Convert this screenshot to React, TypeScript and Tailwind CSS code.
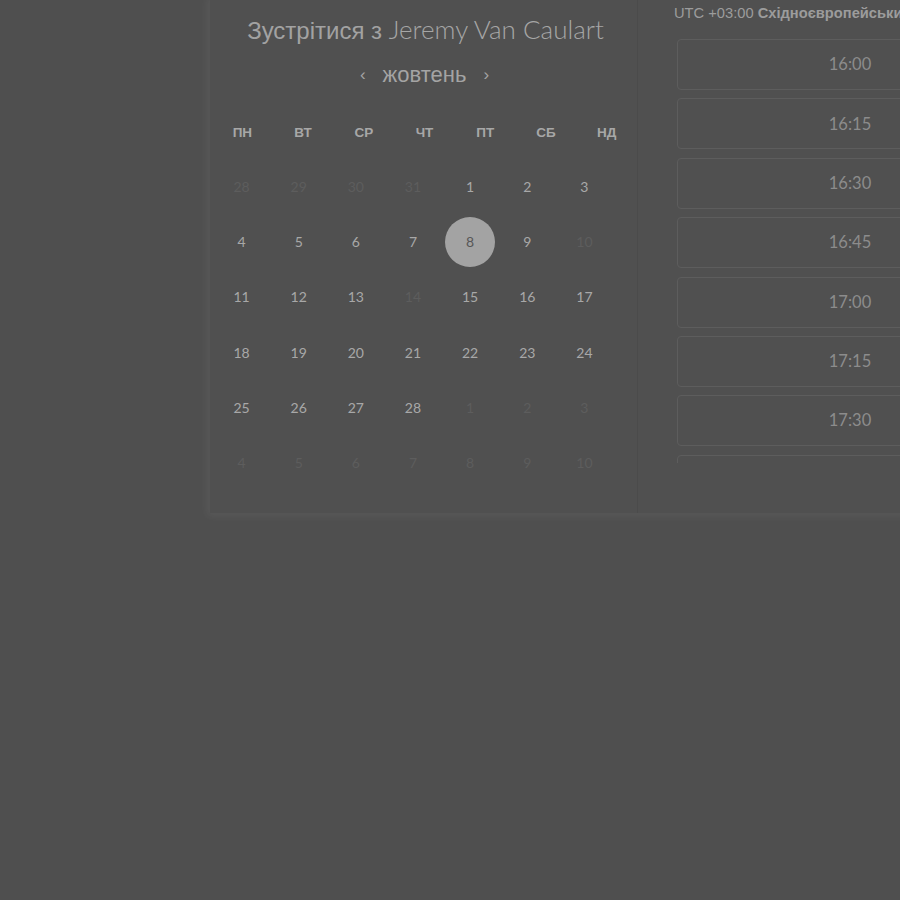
import React from "react";

const weekdays = ["ПН", "ВТ", "СР", "ЧТ", "ПТ", "СБ", "НД"];

// [label, kind] — kind: "off" is a greyed day, "on" is bookable, "sel" is the picked one
type Day = [string, "off" | "on" | "sel"];

const weeks: Day[][] = [
	[["28", "off"], ["29", "off"], ["30", "off"], ["31", "off"], ["1", "on"], ["2", "on"], ["3", "on"]],
	[["4", "on"], ["5", "on"], ["6", "on"], ["7", "on"], ["8", "sel"], ["9", "on"], ["10", "off"]],
	[["11", "on"], ["12", "on"], ["13", "on"], ["14", "off"], ["15", "on"], ["16", "on"], ["17", "on"]],
	[["18", "on"], ["19", "on"], ["20", "on"], ["21", "on"], ["22", "on"], ["23", "on"], ["24", "on"]],
	[["25", "on"], ["26", "on"], ["27", "on"], ["28", "on"], ["1", "off"], ["2", "off"], ["3", "off"]],
	[["4", "off"], ["5", "off"], ["6", "off"], ["7", "off"], ["8", "off"], ["9", "off"], ["10", "off"]],
];

const slots = ["16:00", "16:15", "16:30", "16:45", "17:00", "17:15", "17:30", "17:45"];

const App = () => {
	return (
		<div className="min-h-[900px] w-[900px] overflow-hidden bg-[#4f4f4f]">
			<div className="ml-[210px] flex w-[760px] h-[513px] bg-[#505050] shadow-[0_0_8px_3px_rgba(255,255,255,0.06)]">
				{/* calendar side */}
				<div className="w-[428px] shrink-0 border-r border-[#4b4b4b] flex flex-col">
					<h1 className="mt-[13px] pl-[4px] text-center text-[24px] leading-[32px] text-[#a2a2a2] whitespace-nowrap">
						<span className="font-['Liberation_Sans',sans-serif]">Зустрітися з </span>
						<span className="font-['Lato',sans-serif] font-light text-[26px] text-[#a6a6a6]">Jeremy Van Caulart</span>
					</h1>
					<div className="mt-[15px] pl-[2px] flex items-center justify-center gap-[17px] text-[#a4a4a4] font-['Liberation_Sans',sans-serif]">
						<span className="text-[17px] leading-[20px]">‹</span>
						<span className="text-[22px] leading-[26px]">жовтень</span>
						<span className="text-[17px] leading-[20px]">›</span>
					</div>
					<div className="mt-[37px] ml-[2px] grid grid-cols-7 font-['Liberation_Sans',sans-serif] text-[13.5px] font-bold text-[#a7a7a7] leading-[16px]">
						{weekdays.map((d) => (
							<div key={d} className="text-center">
								{d}
							</div>
						))}
					</div>
					<div className="mt-[18px] ml-[3px] w-[400px] grid grid-cols-7 font-['Lato',sans-serif] text-[14px]">
						{weeks.flat().map(([label, kind], i) => (
							<div key={i} className="h-[55.2px] flex items-center justify-center">
								{kind === "sel" ? (
									<div className="w-[50px] h-[50px] rounded-full bg-[#a3a3a3] text-[#575757] flex items-center justify-center">
										{label}
									</div>
								) : (
									<span className={kind === "on" ? "text-[#a8a8a8]" : "text-[#5d5d5d]"}>{label}</span>
								)}
							</div>
						))}
					</div>
				</div>

				{/* time slots */}
				<div className="flex-1 pl-[36px] flex flex-col">
					<p className="mt-[4px] whitespace-nowrap font-['Liberation_Sans',sans-serif] text-[14.7px] leading-[18px] text-[#9c9c9c]">
						UTC +03:00 <span className="font-bold">Східноєвропейський час</span>
					</p>
					<div className="mt-[17px] ml-[3px] h-[424px] overflow-hidden flex flex-col gap-[8.4px]">
						{slots.map((s) => (
							<div
								key={s}
								className="h-[51px] w-[346px] shrink-0 rounded-[4px] border border-[#5d5d5d] flex items-center justify-center font-['Lato',sans-serif] text-[16.5px] text-[#8c8c8c]"
							>
								{s}
							</div>
						))}
					</div>
				</div>
			</div>
		</div>
	);
};

export default App;
